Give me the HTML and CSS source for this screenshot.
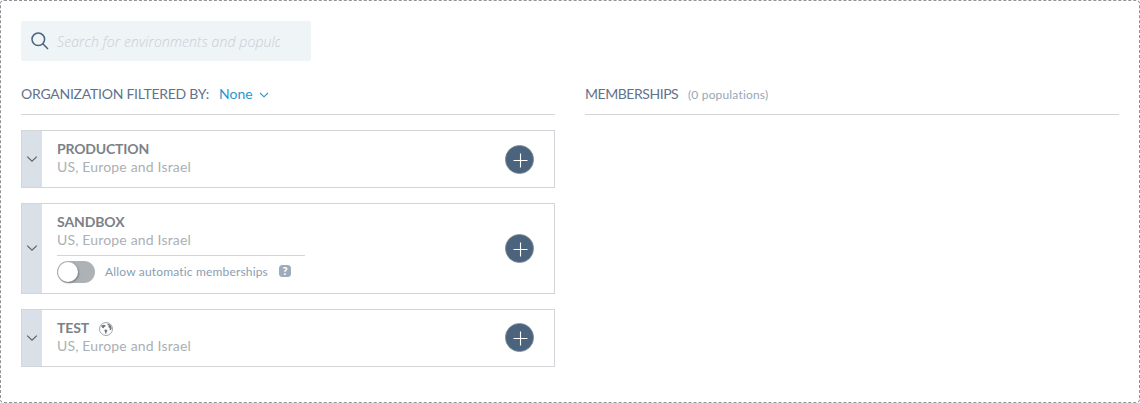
FILE: index.html
```html
<!DOCTYPE html>
<html lang="en">
<head>
<meta charset="utf-8">
<title>Memberships</title>
<link rel="stylesheet" href="styles.css">
</head>
<body>
<svg class="sprite" width="0" height="0">
  <symbol id="chevron" viewBox="0 0 12 8"><path d="M1.2 1.6 6 6.2l4.8-4.600" fill="none" stroke="currentColor" stroke-width="1.2"/></symbol>
  <symbol id="plus" viewBox="0 0 29 29"><circle cx="14.5" cy="14.5" r="14.1" fill="#4b637d" stroke="#84919d" stroke-width=".8"/><path d="M8.500 15.500h14M15.500 8.500v14" fill="none" stroke="#fff" stroke-width="1.100"/></symbol>
</svg>
<main class="panel">
  <label class="search">
    <svg class="search-icon" viewBox="0 0 18 18"><circle cx="7.300" cy="7.300" r="6.300"/><path d="m11.800 11.800 5.200 5.200"/></svg>
    <input class="search-input" type="text" placeholder="Search for environments and populations">
  </label>
  <div class="columns">
    <section class="column">
      <header class="heading">
        <span class="heading-text">ORGANIZATION FILTERED BY:</span>
        <span class="filter">None</span>
        <svg class="filter-arrow" viewBox="0 0 10 6"><path d="m1 1 4 3.800L9 1"/></svg>
      </header>
      <article class="card">
        <div class="handle"><svg class="chevron"><use href="#chevron"/></svg></div>
        <div class="info">
          <div class="name"><span class="production">PRODUCTION</span></div>
          <div class="region">US, Europe and Israel</div>
        </div>
        <svg class="add add-low"><use href="#plus"/></svg>
      </article>
      <article class="card card-tall">
        <div class="handle"><svg class="chevron"><use href="#chevron"/></svg></div>
        <div class="info">
          <div class="name"><span class="sandbox">SANDBOX</span></div>
          <div class="region">US, Europe and Israel</div>
          <div class="auto">
            <span class="toggle"><span class="knob"></span></span>
            <span class="auto-label">Allow automatic memberships</span>
            <span class="help">?</span>
          </div>
        </div>
        <svg class="add"><use href="#plus"/></svg>
      </article>
      <article class="card">
        <div class="handle"><svg class="chevron"><use href="#chevron"/></svg></div>
        <div class="info">
          <div class="name"><span class="test">TEST</span>
            <svg class="globe" viewBox="0 0 14 14"><circle cx="7" cy="7" r="6.500" fill="none" stroke="#8b9094" stroke-width=".8"/><path d="M2.200 3.600 4.800 2.700 6.600 3.300 6.300 4.500 5.300 5 4.800 6.300 3.700 6 2.500 5.100ZM8.300 1.500l2.200.7 1.600 1.900.6 2.500-.9 1.600-1.300-.8.300-1.300-1.500-.8.600-1.500-1.300-.9ZM5.800 7.500l2 .3.800.9-1 1.300-.5 2-.9-.8-.1-1.500-.8-1Z" fill="#73797e"/></svg>
          </div>
          <div class="region">US, Europe and Israel</div>
        </div>
        <svg class="add add-high"><use href="#plus"/></svg>
      </article>
    </section>
    <section class="column">
      <header class="heading">
        <span class="heading-text memberships">MEMBERSHIPS</span>
        <span class="count">(0 populations)</span>
      </header>
    </section>
  </div>
</main>
</body>
</html>
```
FILE: styles.css
```css
* { box-sizing: border-box; }
body { margin: 0; font-family: Lato, "Open Sans", sans-serif; font-size: 14px; background: #fff; }
.sprite { display: block; }
.panel { height: 403px; padding: 20px; border: 1px dashed #909499; border-radius: 4px; }
.search { display: flex; align-items: center; width: 290px; height: 40px; padding: 0 30px 0 10px; background: #eff4f7; border-radius: 2px; }
.search-icon { width: 18px; height: 18px; fill: none; stroke: #4b637d; stroke-width: 1.5; flex: none; }
.search-input { width: 223px; margin: 1px 0 0 8px; padding: 0; border: 0; outline: 0; background: transparent; font: italic 300 14px/20px "Open Sans", sans-serif; letter-spacing: .12px; }
.search-input::placeholder { color: #c8cfd4; opacity: 1; }
.columns { display: flex; gap: 30px; }
.column { flex: 1; display: flex; flex-direction: column; gap: 15px; }
.heading { display: flex; align-items: center; height: 54px; padding-top: 13px; border-bottom: 1px solid #d3d5d8; color: #5f738c; white-space: nowrap; }
.heading-text, .filter, .count { height: 40px; line-height: 40px; }
.heading-text { width: 188px; letter-spacing: -.25px; }
.filter { width: 34px; margin-left: 10px; color: #2996cc; }
.filter-arrow { width: 10px; height: 6px; margin: 1px 0 0 6px; fill: none; stroke: #2996cc; stroke-width: 1.100; }
.memberships { width: 93px; letter-spacing: -.45px; }
.count { margin-left: 10px; padding-top: 1px; font-size: 12px; letter-spacing: .17px; color: #98a7b8; }
.card { display: flex; align-items: center; height: 58px; padding-right: 20px; border: 1px solid #d3d5d8; }
.card-tall { height: 91px; }
.handle { display: flex; align-items: center; justify-content: center; align-self: stretch; width: 20px; padding-bottom: 1px; background: #d9e0e7; color: #59636f; }
.card-tall .handle { padding-bottom: 2px; }
.chevron { width: 12px; height: 8px; }
.info { flex: 1; align-self: flex-start; padding: 9px 0 0 15px; white-space: nowrap; }
.name { display: flex; align-items: center; height: 18px; line-height: 18px; font-weight: 700; color: #7c8187; }
.production { letter-spacing: -.18px; }
.sandbox, .test { letter-spacing: -.1px; }
.region { height: 18px; line-height: 18px; letter-spacing: .17px; color: #abb0b4; }
.globe { width: 14px; height: 14px; margin: 1px 0 0 9.5px; }
.add { width: 29px; height: 29px; }
.add-low { margin-top: 1px; }
.add-high { margin-bottom: 1px; }
.auto { display: flex; align-items: center; width: 248px; height: 32px; margin-top: 6px; border-top: 1px solid #d3d5d8; }
.toggle { width: 38px; height: 22px; padding: 1px; background: #adb2b6; border-radius: 11px; }
.knob { display: block; width: 20px; height: 20px; background: #fff; border-radius: 50%; box-shadow: 1px 1px 2px #777c82; }
.auto-label { width: 163px; margin: -1px 0 0 10px; font-size: 12px; letter-spacing: .17px; color: #8b9db1; }
.help { width: 12px; height: 12px; margin: -1px 0 0 11px; border-radius: 3.5px; background: #9eabba; color: #fff; font-size: 11px; font-weight: 900; line-height: 12px; text-align: center; }
```
